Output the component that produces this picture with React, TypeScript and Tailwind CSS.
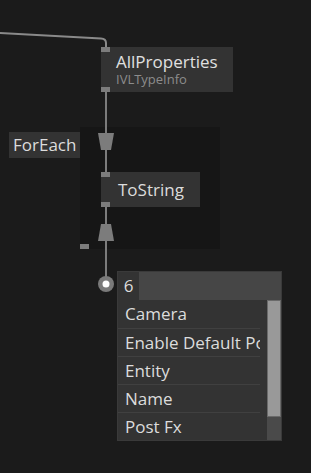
import React from "react";

const font = { fontFamily: "'Open Sans', Lato, sans-serif" };

const items = ["Camera", "Enable Default Post Fx", "Entity", "Name", "Post Fx"];

const Pin = ({ className }: { className: string }) => (
  <div className={`absolute h-[5px] w-[9px] bg-[#7c7c7c] ${className}`} />
);

export default function App() {
  return (
    <div
      className="relative h-[473px] w-[311px] overflow-hidden bg-[#1b1b1b] text-[#dcdcdc]"
      style={font}
    >
      {/* region */}
      <div className="absolute left-[80px] top-[127px] h-[122px] w-[140px] bg-[#161616]" />

      {/* links */}
      <svg className="absolute inset-0" width={311} height={473}>
        <path
          d="M0 33 L101 38.5 Q106 38.8 106 43 L106 47"
          stroke="#8a8a8a"
          strokeWidth={2}
          fill="none"
        />
        <line x1={106} y1={92} x2={106} y2={278} stroke="#7c7c7c" strokeWidth={2} />
        <polygon points="98,133 114,133 111,150 101,150" fill="#7c7c7c" />
        <polygon points="101,224 111,224 114,241 98,241" fill="#7c7c7c" />
        <circle cx={106} cy={284} r={8} fill="#7a7a7a" />
        <circle cx={106} cy={284} r={3.5} fill="#ffffff" />
      </svg>

      {/* AllProperties */}
      <div className="absolute left-[101px] top-[47px] flex h-[45px] w-[132px] flex-col bg-[#333333] pl-[15px] pt-[5px]">
        <span className="text-[17px] leading-[19px] text-[#e0e0e0]">AllProperties</span>
        <span className="text-[13px] leading-[16px] text-[#8c8c8c]">IVLTypeInfo</span>
        <Pin className="left-0 top-0" />
        <Pin className="bottom-0 left-0" />
      </div>

      {/* ForEach */}
      <div className="absolute left-[9px] top-[132px] flex h-[26px] w-[71px] items-center bg-[#333333] pl-[4px] text-[17px]">
        ForEach
      </div>

      {/* ToString */}
      <div className="absolute left-[101px] top-[172px] flex h-[35px] w-[99px] items-center bg-[#333333] pl-[17px] text-[17px]">
        ToString
        <Pin className="left-0 top-0" />
        <Pin className="bottom-0 left-0" />
      </div>

      <Pin className="left-[80px] top-[244px]" />

      {/* dropdown */}
      <div className="absolute left-[117px] top-[271px] flex w-[165px] flex-col border border-[#3a3a3a] bg-[#333333]">
        <div className="flex h-[28px] bg-[#464646]">
          <div className="flex w-[21px] items-center justify-center bg-[#333333] text-[17px]">6</div>
        </div>
        <div className="flex">
          <div className="flex min-w-0 flex-1 flex-col pr-[7px]">
            {items.map((item, i) => (
              <div
                key={item}
                className={`flex h-[28px] items-center overflow-hidden whitespace-nowrap pl-[7px] text-[17px] ${
                  i > 0 ? "border-t border-[#404040]" : ""
                }`}
              >
                {item}
              </div>
            ))}
          </div>
          <div className="flex w-[14px] flex-col bg-[#4a4a4a]">
            <div className="h-[117px] border border-[#6a6a6a] bg-[#999999]" />
          </div>
        </div>
      </div>
    </div>
  );
}
